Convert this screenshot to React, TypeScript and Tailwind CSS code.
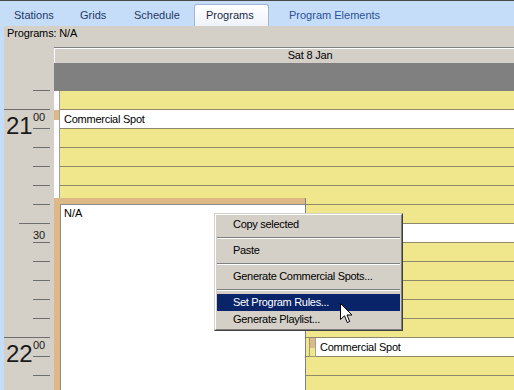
import React from "react";

const FONT = "font-['Liberation_Sans',Arial,sans-serif]";

type RowKind = "y" | "c1" | "w" | "c2";
const rows: RowKind[] = ["y", "c1", "y", "y", "y", "y", "y", "w", "y", "y", "y", "y", "y", "c2", "y", "y"];

function Tick({ kind }: { kind: "s" | "h" | "m" }) {
  const w = kind === "h" ? "w-[46px]" : kind === "m" ? "w-[31px]" : "w-[17px]";
  return <div className={`h-px shrink-0 ${w} ml-auto mr-[4px] bg-[#6e6e6e]`} />;
}

function Ruler() {
  return (
    <div className="w-[50px] shrink-0 flex flex-col">
      <div className="h-[44px] shrink-0 flex flex-col justify-end">
        <Tick kind="s" />
      </div>
      {rows.map((_, i) => {
        const kind = i === 0 || i === 12 ? "h" : i === 6 ? "m" : "s";
        return (
          <div key={i} className="h-[19px] shrink-0 relative flex flex-col justify-end">
            {(i === 1 || i === 13) && (
              <>
                <span className="absolute left-[2px] top-[4px] text-[24px] leading-none text-[#1a1a1a]">
                  {i === 1 ? "21" : "22"}
                </span>
                <span className="absolute left-[29px] top-[2px] text-[11px] leading-none text-[#1a1a1a]">00</span>
              </>
            )}
            {i === 7 && (
              <span className="absolute left-[29px] top-[6px] text-[11px] leading-none text-[#1a1a1a]">30</span>
            )}
            <Tick kind={kind as "s" | "h" | "m"} />
          </div>
        );
      })}
    </div>
  );
}

function Row({ kind }: { kind: RowKind }) {
  if (kind === "c1") {
    return (
      <div className="h-[19px] shrink-0 flex">
        <div className="w-[5px] bg-white flex flex-col">
          <div className="h-[10px] bg-[#deb887]" />
        </div>
        <div className="w-px bg-[#a0a0a0]" />
        <div className="flex-1 bg-white border-b border-[#8c8868] pl-[4px] text-[11px] leading-[18px] tracking-[-0.25px]">
          Commercial Spot
        </div>
      </div>
    );
  }
  if (kind === "c2") {
    return (
      <div className="h-[19px] shrink-0 flex">
        <div className="w-[5px] bg-white" />
        <div className="w-px bg-[#a0a0a0]" />
        <div className="w-[249px] bg-[#f0e68c] border-b border-[#8c8868]" />
        <div className="w-[6px] flex flex-col border-b border-[#8c8868] bg-[#f0e68c] border-l border-[#a09a78]">
          <div className="h-[10px] bg-[#deb887]" />
        </div>
        <div className="w-px bg-[#a0a0a0]" />
        <div className="flex-1 bg-white border-b border-[#8c8868] pl-[4px] text-[11px] leading-[18px] tracking-[-0.25px]">
          Commercial Spot
        </div>
      </div>
    );
  }
  return (
    <div className="h-[19px] shrink-0 flex">
      <div className="w-[5px] bg-white" />
      <div className="w-px bg-[#a0a0a0]" />
      <div className={`flex-1 border-b border-[#8c8868] ${kind === "w" ? "bg-white" : "bg-[#f0e68c]"}`} />
    </div>
  );
}

function Grid() {
  return (
    <div className="w-[512px] shrink-0 flex flex-col relative">
      <div className="h-[17px] shrink-0 bg-[#d4d0c8] border-t border-b border-[#808080] shadow-[inset_1px_1px_0_#ffffff] text-center text-[11px] leading-[15px] tracking-[-0.2px]">
        Sat 8 Jan
      </div>
      <div className="h-[27px] shrink-0 bg-[#808080]" />
      <div className="flex flex-col relative">
        {rows.map((k, i) => (
          <Row key={i} kind={k} />
        ))}
        {/* N/A program block placed by time */}
        <div className="absolute left-0 top-[107px] w-[252px] h-[200px] bg-[#deb887] border-r border-[#808080] pt-[6px] pl-[6px]">
          <div className="h-full bg-white border-l border-t border-[#8a8a8a] pl-[3px] pt-[2px] text-[11px] leading-[13px]">
            N/A
          </div>
        </div>
      </div>
    </div>
  );
}

function MenuItem({ label, active }: { label: string; active?: boolean }) {
  return (
    <div
      className={`h-[17px] pl-[16px] text-[11px] leading-[17px] tracking-[-0.3px] ${
        active ? "bg-[#0a246a] text-white" : "text-black"
      }`}
    >
      {label}
    </div>
  );
}

function Sep() {
  return (
    <div className="h-[9px] flex flex-col pt-[4px]">
      <div className="h-px bg-[#808080]" />
      <div className="h-px bg-white" />
    </div>
  );
}

function ContextMenu() {
  return (
    <div className="absolute left-[214px] top-[213px] w-[189px] bg-[#d4d0c8] border border-t-[#d4d0c8] border-l-[#d4d0c8] border-r-[#404040] border-b-[#404040]">
      <div className="border border-t-white border-l-white border-r-[#808080] border-b-[#808080] p-px">
        <MenuItem label="Copy selected" />
        <Sep />
        <MenuItem label="Paste" />
        <Sep />
        <MenuItem label="Generate Commercial Spots..." />
        <Sep />
        <MenuItem label="Set Program Rules..." active />
        <MenuItem label="Generate Playlist..." />
      </div>
    </div>
  );
}

function Cursor() {
  return (
    <svg className="absolute left-[340px] top-[303px]" width="14" height="22" viewBox="0 0 14 22">
      <path
        d="M0.5 0.5 L0.5 16.5 L4.5 12.8 L7.3 19.5 L9.7 18.5 L7 12 L12 12 Z"
        fill="#ffffff"
        stroke="#000000"
        strokeWidth="1"
        strokeLinejoin="miter"
      />
    </svg>
  );
}

export default function App() {
  return (
    <div className={`w-[514px] h-[390px] overflow-hidden relative bg-[#c6ddf9] text-black ${FONT}`}>
      <div className="h-px bg-[#4a4a4a]" />
      <div className="h-[25px] flex items-end text-[11px]">
        <div className="w-[67px] h-[22px] pl-[14px] leading-[22px] text-[#1e3a66]">Stations</div>
        <div className="w-[54px] h-[22px] pl-[13px] leading-[22px] text-[#1e3a66]">Grids</div>
        <div className="w-[73px] h-[22px] pl-[13px] leading-[22px] text-[#1e3a66]">Schedule</div>
        <div className="w-[75px] h-[22px] pl-[11px] leading-[21px] text-[#1a2a44] bg-gradient-to-b from-white to-[#eef3fa] border border-b-0 border-[#9fb5d0] rounded-t-[3px]">
          Programs
        </div>
        <div className="w-[120px] h-[22px] pl-[20px] leading-[22px] text-[#2a5298]">Program Elements</div>
      </div>
      <div className="ml-[4px] h-[364px] overflow-hidden bg-[#d4d0c8] flex flex-col">
        <div className="h-[21px] shrink-0 pl-[3px] pt-px text-[11px] leading-[13px] tracking-[-0.15px]">Programs: N/A</div>
        <div className="flex shrink-0">
          <Ruler />
          <Grid />
        </div>
      </div>
      <ContextMenu />
      <Cursor />
    </div>
  );
}
